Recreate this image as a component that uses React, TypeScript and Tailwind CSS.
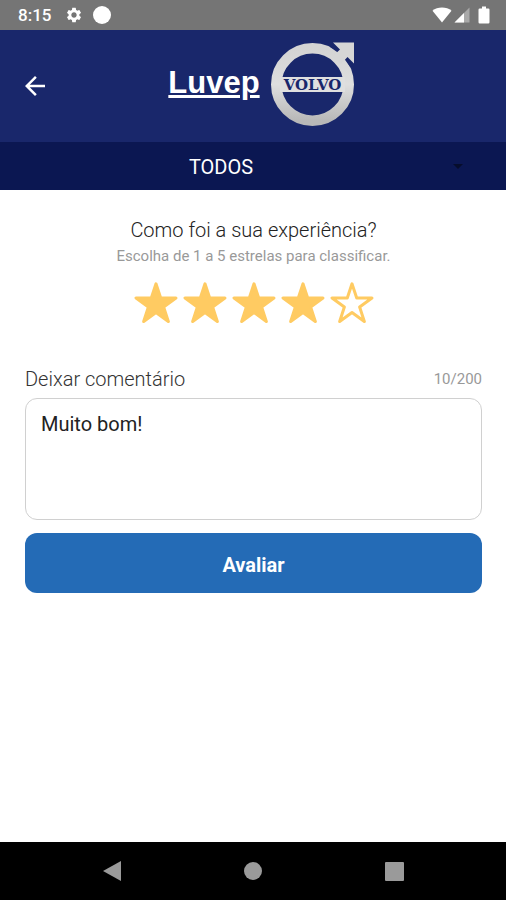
import { useState } from "react";
import { MdArrowBack, MdArrowDropDown, MdSettings } from "react-icons/md";

const MAX_LENGTH = 200;

function StatusBar() {
  return (
    <div className="flex h-[30px] items-center justify-between bg-[#757575] pr-4 pl-[18px] text-white">
      <div className="flex items-center">
        <span className="text-[17px] leading-5 font-medium">8:15</span>
        <MdSettings className="ml-3.5 h-[18px] w-[18px]" />
        <span className="ml-[10px] h-[18px] w-[18px] rounded-full bg-white" />
      </div>
      <div className="flex items-center">
        <svg viewBox="0 0 20 16" className="h-4 w-5 fill-white">
          <path d="M10 15.5 0.5 3.8C3 1.6 6.3 0.5 10 0.5s7 1.1 9.5 3.3Z" />
        </svg>
        <svg viewBox="0 0 16 16" className="ml-0.5 h-4 w-4">
          <path d="M15.5 0.5v15H0.5Z" fill="#a9a9a9" />
          <path d="M10 6v9.5H0.5Z" fill="#fff" />
        </svg>
        <svg viewBox="0 0 12 18" className="ml-2 h-[18px] w-3 fill-white">
          <path d="M4 0.500h4v2h2.300q1.200 0 1.200 1.200v12.600q0 1.200-1.200 1.200h-8.600q-1.200 0-1.200-1.200v-12.600q0-1.200 1.200-1.200h2.300Z" />
        </svg>
      </div>
    </div>
  );
}

function VolvoLogo() {
  return (
    <svg viewBox="0 0 86 86" className="h-[86px] w-[86px]" role="img" aria-label="Volvo">
      <defs>
        <linearGradient id="steel" x1="0" y1="0" x2="0" y2="1">
          <stop offset="0" stopColor="#d4d4d4" />
          <stop offset="0.5" stopColor="#dedede" />
          <stop offset="1" stopColor="#b8b8b8" />
        </linearGradient>
      </defs>
      <circle cx="42.500" cy="43.500" r="36.200" fill="none" stroke="url(#steel)" strokeWidth="10.600" />
      <path d="M60.500 4.500 69 10.500M75.500 17 81.500 25.500" stroke="#19276b" strokeWidth="3" />
      <path d="M63 1.500H84V22.500L77.500 16 71 23 62.500 15.500 70 8.500Z" fill="#d6d6d6" />
      <rect x="10" y="36" width="65" height="15" fill="#dfdfdf" />
      <text
        x="42.500"
        y="49"
        textAnchor="middle"
        fontFamily="DejaVu Serif, serif"
        fontWeight="700"
        fontSize="15"
        fill="#19276b"
      >
        VOLVO
      </text>
    </svg>
  );
}

function Header() {
  return (
    <header className="grid h-28 grid-cols-[1fr_auto_1fr] items-center bg-[#19276b] px-5 text-white">
      <button type="button" aria-label="Voltar" className="justify-self-start">
        <MdArrowBack className="h-[30px] w-[30px]" />
      </button>
      <div className="flex items-center gap-2.5 pb-1 pl-[18px]">
        <span className="pb-0.5 font-['Liberation_Sans',sans-serif] text-[31px] leading-9 font-bold underline">
          Luvep
        </span>
        <VolvoLogo />
      </div>
    </header>
  );
}

function Star({ filled }: { filled: boolean }) {
  return (
    <svg viewBox="0 0 44 42" className="h-[42px] w-11">
      <path
        d="M22 1.800 26.710 16H41.970L29.630 25 34.340 39.500 22 30.500 9.660 39.500 14.370 25 2.030 16H17.290Z"
        fill={filled ? "#ffcb62" : "none"}
        stroke="#ffcb62"
        strokeWidth="3"
        strokeLinejoin="round"
      />
    </svg>
  );
}

export default function App() {
  const [rating, setRating] = useState<number>(4);
  const [comment, setComment] = useState<string>("Muito bom!");

  return (
    <div className="flex min-h-screen flex-col bg-white font-[Roboto,sans-serif]">
      <StatusBar />
      <Header />
      <div className="relative bg-[#0b1752] text-white">
        <select
          aria-label="Filtro"
          className="block h-12 w-full appearance-none pt-0.5 pr-16 text-center text-[20px] leading-6"
        >
          <option>TODOS</option>
        </select>
        <MdArrowDropDown className="pointer-events-none absolute top-3 right-9 h-6 w-6 text-[#060d2c]" />
      </div>

      <main className="flex flex-1 flex-col pt-7 pr-6 pl-[25px]">
        <form onSubmit={(e) => e.preventDefault()}>
          <fieldset className="text-center">
            <legend className="w-full text-[20px] leading-6 font-light text-[#222]">
              Como foi a sua experiência?
            </legend>
            <p className="mt-1 text-[15px] leading-5 text-[#999]">
              Escolha de 1 a 5 estrelas para classificar.
            </p>
            <div className="mt-4 flex justify-center gap-[5px]">
              {[1, 2, 3, 4, 5].map((n) => (
                <label key={n} className="relative cursor-pointer">
                  <input
                    type="radio"
                    name="rating"
                    value={n}
                    checked={rating === n}
                    onChange={() => setRating(n)}
                    aria-label={`${n} estrelas`}
                    className="sr-only"
                  />
                  <Star filled={n <= rating} />
                </label>
              ))}
            </div>
          </fieldset>

          <div className="mt-[43px] flex items-center justify-between">
            <label htmlFor="comment" className="text-[20px] leading-6 font-light text-[#333]">
              Deixar comentário
            </label>
            <span className="text-[15px] leading-5 text-[#999]">
              {comment.length}/{MAX_LENGTH}
            </span>
          </div>
          <textarea
            id="comment"
            maxLength={MAX_LENGTH}
            value={comment}
            onChange={(e) => setComment(e.target.value)}
            className="mt-[7px] block h-[122px] w-full resize-none rounded-xl border border-[#d0d0d0] px-[15px] py-[13px] text-[20px] leading-6 text-[#222]"
          />
          <button
            type="submit"
            className="mt-[13px] h-[60px] w-full rounded-xl bg-[#246bb6] pt-1 text-[20px] leading-6 font-bold text-white"
          >
            Avaliar
          </button>
        </form>
      </main>

      <nav className="grid h-[58px] grid-cols-[1fr_auto_1fr] items-center bg-black px-[102px]">
        <button type="button" aria-label="Voltar do sistema" className="justify-self-start">
          <svg viewBox="0 0 20 22" className="h-[22px] w-5 fill-[#9a9a9a]">
            <path d="M19 1v20L1 11Z" />
          </svg>
        </button>
        <button type="button" aria-label="Início" className="h-[18px] w-[18px] rounded-full bg-[#9a9a9a]" />
        <button
          type="button"
          aria-label="Recentes"
          className="h-[19px] w-[19px] justify-self-end rounded-[1px] bg-[#9a9a9a]"
        />
      </nav>
    </div>
  );
}
